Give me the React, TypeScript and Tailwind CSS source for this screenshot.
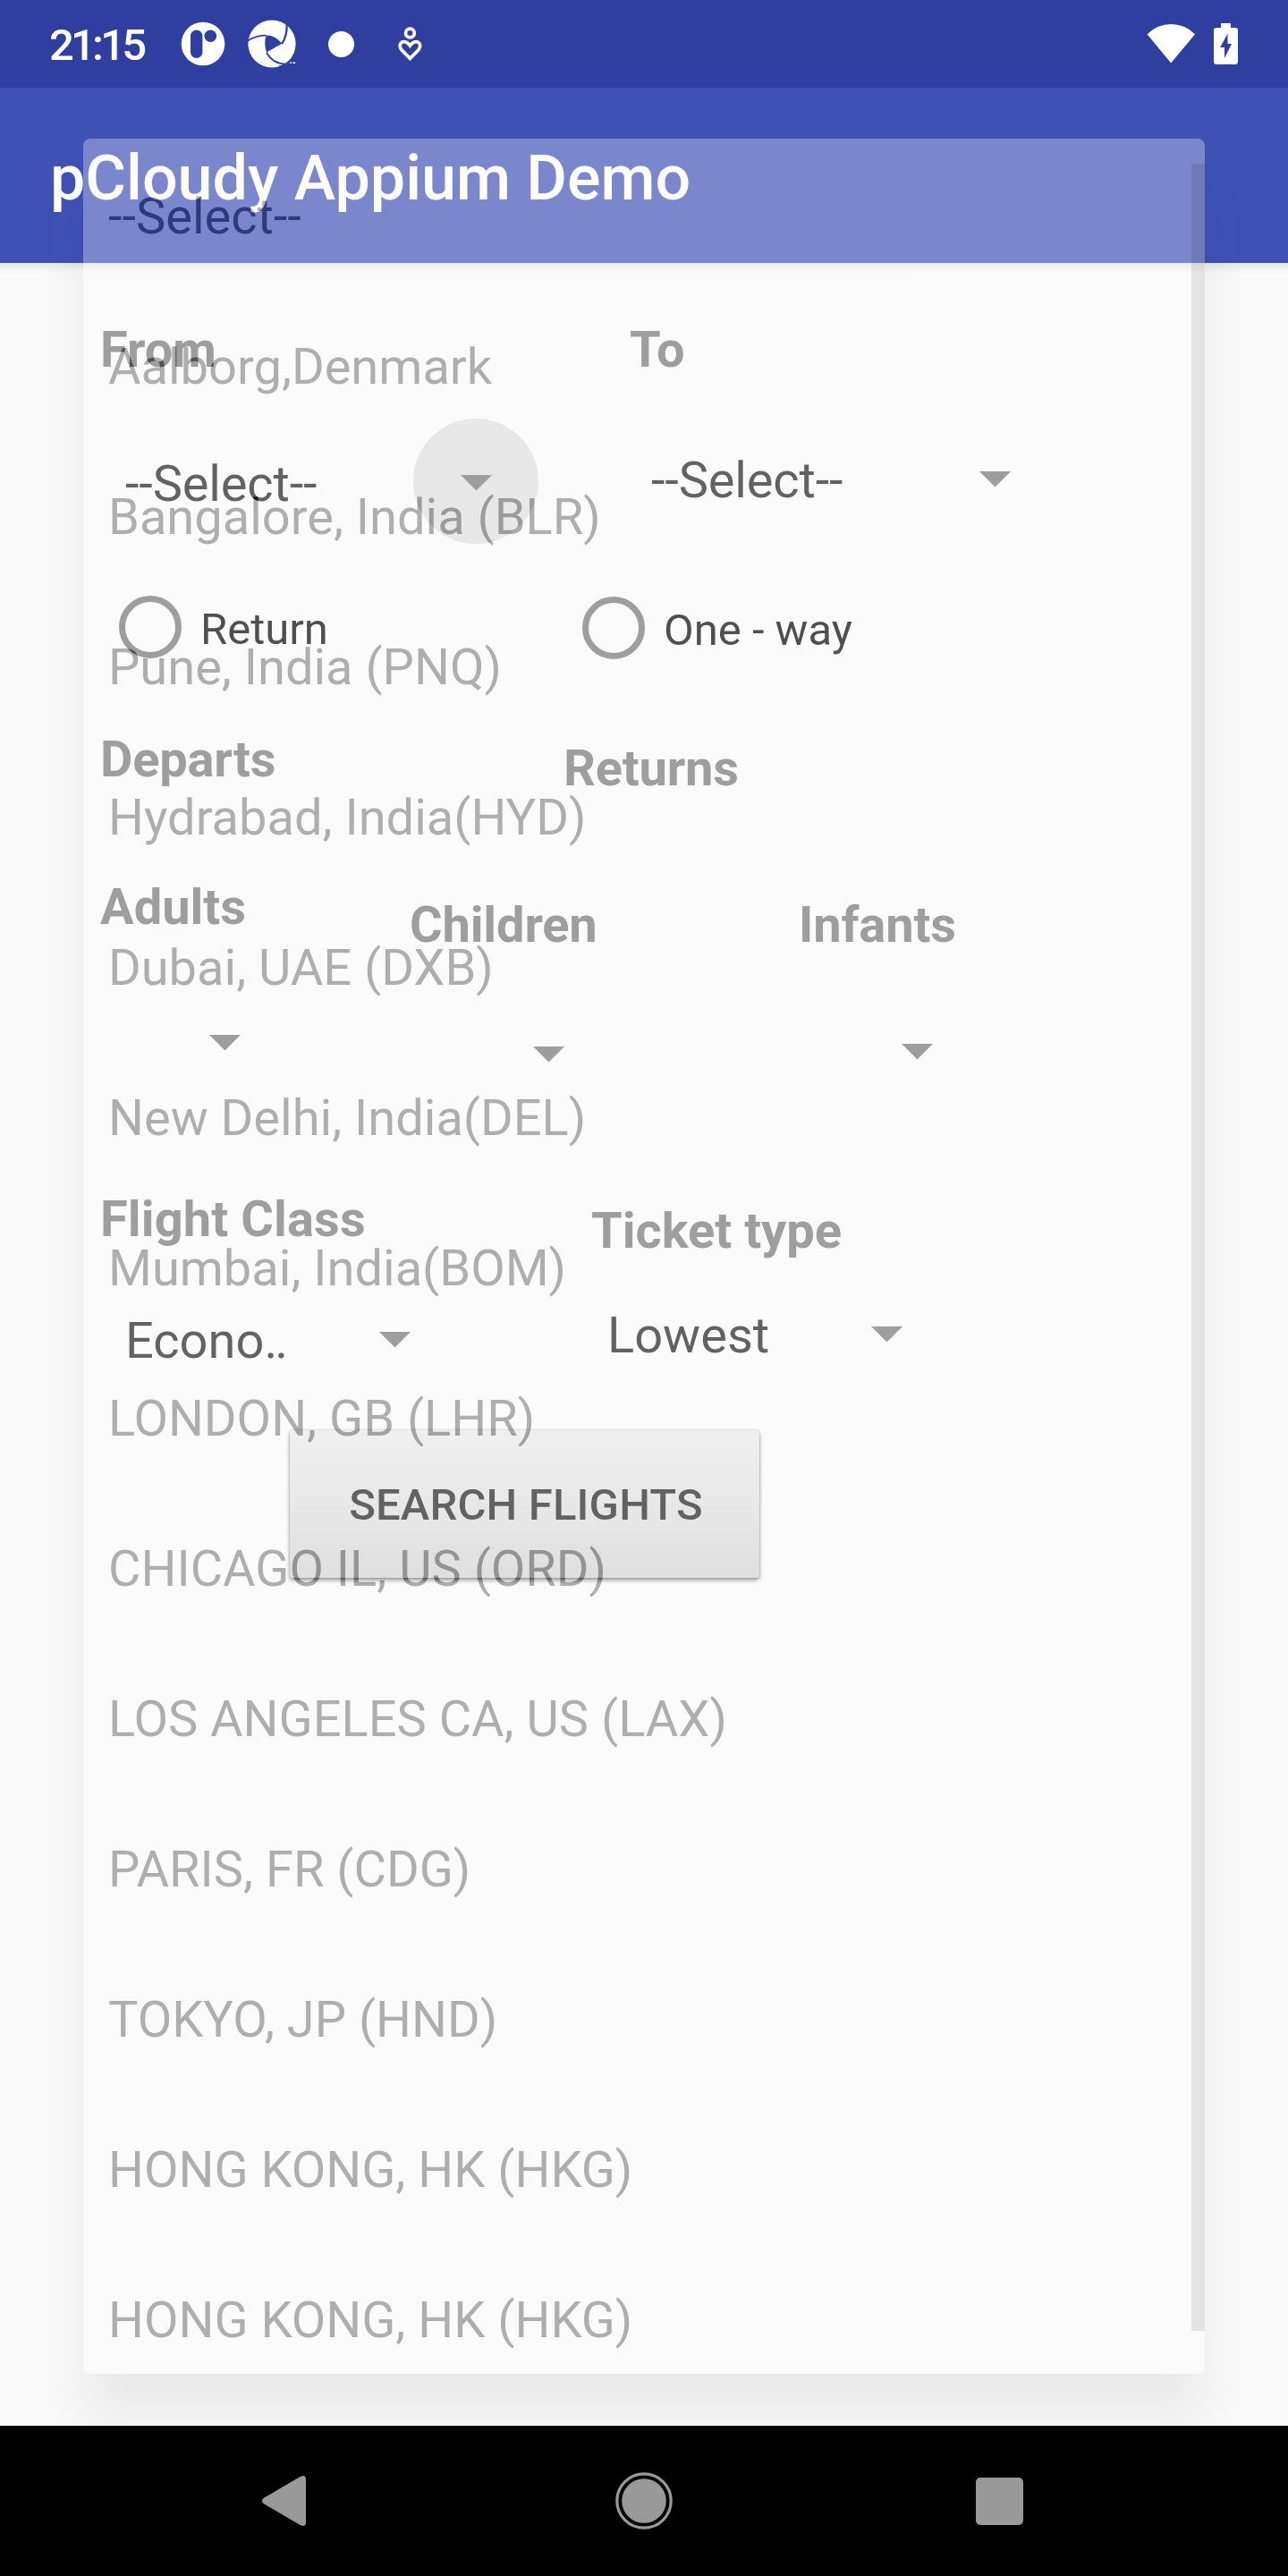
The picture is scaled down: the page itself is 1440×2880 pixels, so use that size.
import React from "react";

const airports = [
  "--Select--",
  "Aalborg,Denmark",
  "Bangalore, India (BLR)",
  "Pune, India (PNQ)",
  "Hydrabad, India(HYD)",
  "Dubai, UAE (DXB)",
  "New Delhi, India(DEL)",
  "Mumbai, India(BOM)",
  "LONDON, GB (LHR)",
  "CHICAGO IL, US (ORD)",
  "LOS ANGELES CA, US (LAX)",
  "PARIS, FR (CDG)",
  "TOKYO, JP (HND)",
  "HONG KONG, HK (HKG)",
  "HONG KONG, HK (HKG)",
];

function StatusBar() {
  return (
    <header className="flex h-[98px] shrink-0 items-center bg-[#303f9f] text-white">
      <span className="ml-[55px] w-[147px] pt-[4px] text-[49px] leading-[58px] font-medium tracking-[-3.8px]">21:15</span>
      <svg className="h-[50px] w-[50px] shrink-0" viewBox="0 0 50 50">
        <circle cx="25" cy="25" r="24.3" fill="#fff" />
        <rect x="11" y="9.5" width="13.4" height="31.5" rx="6.7" fill="#303f9f" />
        <circle cx="33.3" cy="16.3" r="6.8" fill="#303f9f" />
      </svg>
      <svg className="ml-[25px] h-[54px] w-[54px] shrink-0" viewBox="0 0 54 54">
        <circle cx="27" cy="27" r="26.6" fill="#fff" />
        <path d="M20.5 17.6 Q30 17 38.2 26.8 L21 36.6 Q17.6 27 20.5 17.6Z" fill="#303f9f" />
        <g fill="none" stroke="#303f9f" strokeWidth="1.8">
          <path d="M0 23.6 Q9 17.5 20.5 17.6" />
          <path d="M38 27 Q44.5 18 43.6 4" strokeWidth="2.2" />
          <path d="M21 36.5 Q27.5 49.5 44 49.8" />
        </g>
        <path d="M35 51.5 Q41 50.5 46 47 L54 47 L54 54 L35 54Z" fill="#303f9f" />
        <path d="M47 48.3h2M50.3 48.3h3" stroke="#fff" strokeWidth="1.6" />
      </svg>
      <span className="ml-[36px] h-[29px] w-[29px] rounded-full bg-white" />
      <svg className="ml-[48px] h-[42px] w-[28px] shrink-0" viewBox="0 0 28 42">
        <g fill="none" stroke="#fff" strokeWidth="3.7">
          <circle cx="14.4" cy="9" r="4.9" />
          <path d="M14.4 37.4 L4.7 27.6 C-0.5 20 8.5 14.4 14.4 23 C20.3 14.4 29.3 20 24.1 27.6 Z" />
        </g>
      </svg>
      <svg className="ml-auto h-[46px] w-[54px] shrink-0" viewBox="0 0 54 46">
        <path d="M0.5 12.2 Q12 1 27.2 1 Q42.500 1 54 12.2 L27.200 44.5Z" fill="#fff" />
      </svg>
      <svg className="mr-[56px] ml-[20px] h-[46px] w-[28px] shrink-0" viewBox="0 0 28 46">
        <path d="M9 0h11v5h5a3 3 0 0 1 3 3v35a3 3 0 0 1-3 3H4a3 3 0 0 1-3-3V8a3 3 0 0 1 3-3h5z" fill="#fff" />
        <path d="M16.500 11.500v11.500h4.500L13 39V27H8.200z" fill="#303f9f" />
      </svg>
    </header>
  );
}

function Caret({ className = "" }: { className?: string }) {
  return (
    <svg className={`h-[18px] w-[35px] shrink-0 ${className}`} viewBox="0 0 35 18">
      <path d="M0 0h35L17.500 17.500z" fill="#737373" />
    </svg>
  );
}

function Label({ className = "", children }: { className?: string; children: React.ReactNode }) {
  return <h2 className={`shrink-0 font-bold whitespace-nowrap text-[#737373] ${className}`}>{children}</h2>;
}

function Radio({ label, className = "" }: { label: string; className?: string }) {
  return (
    <label className={`flex shrink-0 items-start ${className}`}>
      <span className="h-[70px] w-[70px] rounded-full border-[7px] border-[#737373]" />
      <span className="mt-[9px] ml-[21px] text-[49px] leading-[57px] whitespace-nowrap text-black">{label}</span>
    </label>
  );
}

function FlightForm() {
  return (
    <main className="flex h-[2418px] flex-col items-stretch bg-[#fafafa] px-[112px] text-[56px] leading-[66px] text-[#1c1c1c]">
      <div className="flex h-[174px] items-start pt-[64px]">
        <Label className="w-[592px]">From</Label>
        <Label>To</Label>
      </div>
      <div className="flex h-[198px] items-start">
        <div className="flex w-[588px] items-start pl-[28px]">
          <span className="mt-[40px] w-[322px] tracking-[-0.15px]">--Select--</span>
          <span className="flex h-[140px] w-[140px] items-start justify-center rounded-full bg-[#dedede] pt-[63px]">
            <Caret />
          </span>
        </div>
        <div className="flex items-start pl-[28px]">
          <span className="mt-[36px] w-[367px] tracking-[-0.15px]">--Select--</span>
          <Caret className="mt-[59px]" />
        </div>
      </div>
      <div className="flex h-[150px] items-start pl-[21px]">
        <Radio label="Return" className="w-[518px]" />
        <Radio label="One - way" className="mt-px" />
      </div>
      <div className="flex h-[165px] items-start">
        <Label className="w-[518px] tracking-[-0.2px]">Departs</Label>
        <Label className="mt-[10px] tracking-[-0.2px]">Returns</Label>
      </div>
      <div className="flex h-[176px] items-start">
        <Label className="w-[346px]">Adults</Label>
        <Label className="mt-[20px] w-[435px] tracking-[-0.15px]">Children</Label>
        <Label className="mt-[20px] tracking-[-0.15px]">Infants</Label>
      </div>
      <div className="flex h-[173px] items-start">
        <Caret className="ml-[122px]" />
        <Caret className="mt-[13px] ml-[327px]" />
        <Caret className="mt-[10px] ml-[377px]" />
      </div>
      <div className="flex h-[130px] items-start">
        <Label className="w-[549px] tracking-[0.1px]">Flight Class</Label>
        <Label className="mt-[13px]">Ticket type</Label>
      </div>
      <div className="flex h-[139px] items-start pl-[28px]">
        <span className="mt-[6px] w-[284px]">
          Econo<span className="tracking-[-3px]">..</span>
        </span>
        <Caret className="mt-[29px]" />
        <span className="ml-[220px] w-[295px]">Lowest</span>
        <Caret className="mt-[23px]" />
      </div>
      <button className="ml-[212px] flex h-[165px] w-[525px] items-center justify-center rounded-[4px] bg-linear-to-b from-[#eaeaea] to-[#d2d2d2] pt-[2px] pl-[3px] text-[49px] font-medium tracking-[0.15px] text-[#1c1c1c] shadow-[0_3px_4px_rgba(0,0,0,0.5),0_0_3px_rgba(0,0,0,0.3)]">
        SEARCH FLIGHTS
      </button>
    </main>
  );
}

function AirportMenu() {
  return (
    <div className="absolute top-[155px] left-[93px] h-[2499px] w-[1254px] rounded-[8px] shadow-[0_52px_56px_rgba(0,0,0,0.066)]">
      <ul className="h-full overflow-hidden rounded-[8px] bg-white pt-[3px] text-[56px] leading-[66px] text-[#080808] opacity-[0.31]">
        {airports.map((name, i) => (
          <li key={i} className="flex h-[168px] items-center pl-[28px]">
            {name}
          </li>
        ))}
      </ul>
      <span className="absolute top-[28px] right-0 h-[2423px] w-[15px] bg-black/9" />
    </div>
  );
}

function NavBar() {
  return (
    <nav className="flex h-[168px] shrink-0 items-center bg-black">
      <svg className="ml-[293px] h-[56px] w-[50px]" viewBox="0 0 50 56">
        <path d="M43 0.800Q49 -1.500 49 4V52Q49 57.500 43 55.200L1.500 31Q-1.500 28 1.500 25Z" fill="#999" />
      </svg>
      <svg className="ml-[345px] h-[64px] w-[64px]" viewBox="0 0 64 64">
        <circle cx="32" cy="32" r="30.200" fill="none" stroke="#999" strokeWidth="3.200" />
        <circle cx="32" cy="32" r="24.800" fill="#999" />
      </svg>
      <span className="ml-[339px] h-[53px] w-[53px] rounded-[5px] bg-[#999]" />
    </nav>
  );
}

export default function App() {
  return (
    <div className="relative flex h-[2880px] w-[1440px] flex-col overflow-hidden bg-[#fafafa] font-['Roboto',sans-serif]">
      <StatusBar />
      <div className="h-[196px] shrink-0 bg-[#3f51b5] pt-[60px] pl-[56px] text-[70px] leading-[82px] font-medium text-white">
        pCloudy Appium Demo
      </div>
      <div className="h-0">
        <div className="relative h-[12px] bg-linear-to-b from-black/8 to-transparent" />
      </div>
      <FlightForm />
      <AirportMenu />
      <div className="relative">
        <NavBar />
      </div>
    </div>
  );
}
